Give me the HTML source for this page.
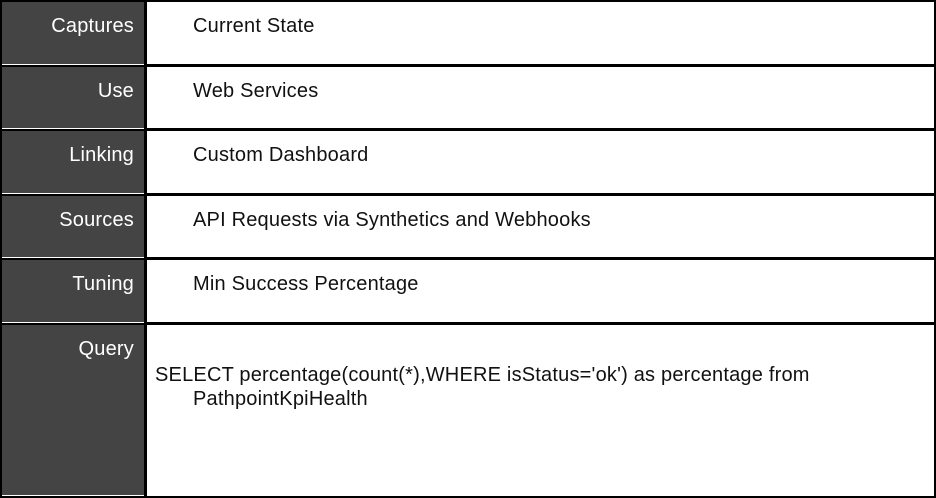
<!DOCTYPE html>
<html><head><style>
body{margin:0;width:936px;height:498px;background:#000;position:relative;overflow:hidden;font-family:"Liberation Sans",sans-serif;font-size:20px;letter-spacing:0.2px}
.l{position:absolute;left:2px;width:142px;background:#444;border-bottom:1px solid #fff;box-sizing:border-box;color:#fff;text-align:right;padding-right:10px;padding-top:13px}
.r{position:absolute;left:147px;width:787px;background:#fff;color:#111;padding-top:13px;box-sizing:border-box;padding-left:46px}
</style></head><body>
<div class="l" style="top:2px;height:63px">Captures</div><div class="r" style="top:2px;height:62px">Current State</div>
<div class="l" style="top:67px;height:62px">Use</div><div class="r" style="top:67px;height:61px">Web Services</div>
<div class="l" style="top:131px;height:63px">Linking</div><div class="r" style="top:131px;height:62px">Custom Dashboard</div>
<div class="l" style="top:196px;height:62px">Sources</div><div class="r" style="top:196px;height:61px">API Requests via Synthetics and Webhooks</div>
<div class="l" style="top:260px;height:63px">Tuning</div><div class="r" style="top:260px;height:62px">Min Success Percentage</div>
<div class="l" style="top:325px;height:171px">Query</div>
<div class="r" style="top:325px;height:171px;padding-left:8px;padding-top:38px;line-height:24px"><div style="padding-left:38px;text-indent:-38px">SELECT percentage(count(*),WHERE isStatus='ok') as percentage from<br>PathpointKpiHealth</div></div>
</body></html>
